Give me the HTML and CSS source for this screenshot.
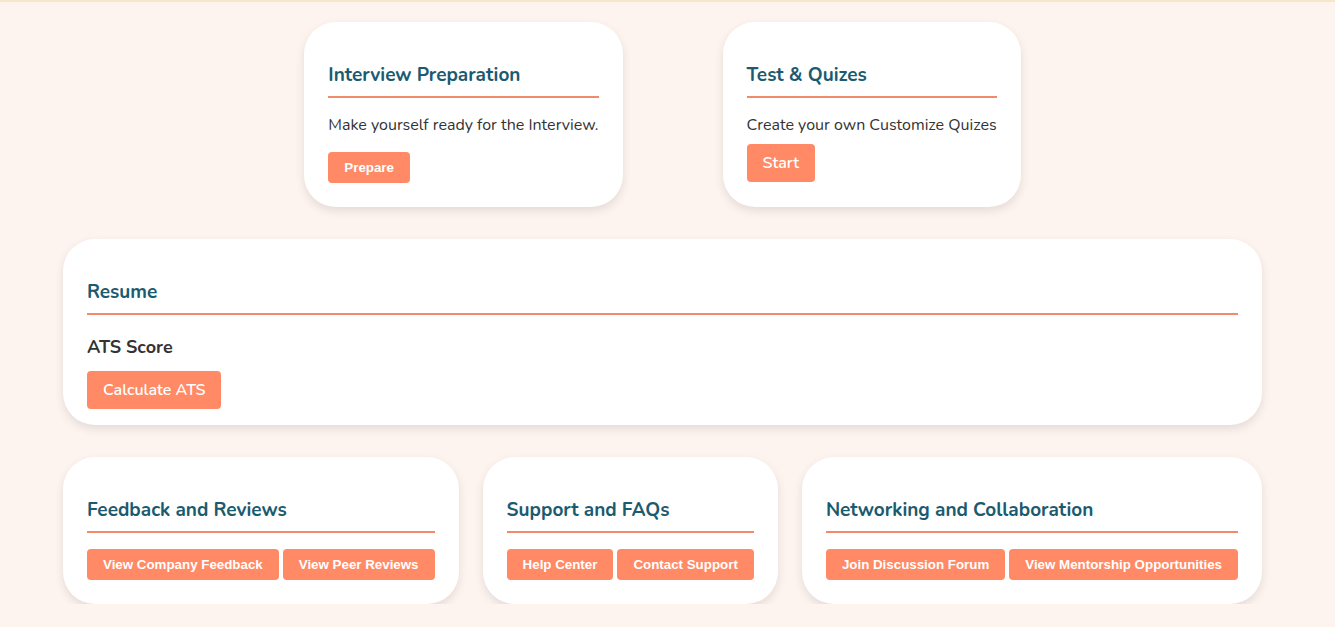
FILE: index.html
```html
<!DOCTYPE html>
<html lang="en">
<head>
  <meta charset="UTF-8" />
  <meta name="viewport" content="width=device-width, initial-scale=1.0"/>
  <title>Dashboard</title>
  <link rel="stylesheet" href="styles.css">
</head>
<body>
  <div class="topline"></div>
  <main class="dashboard">
    <div class="row row-top">
      <div class="card">
        <h3>Interview Preparation</h3>
        <p>Make yourself ready for the Interview.</p>
        <button class="btn">Prepare</button>
      </div>
      <div class="card">
        <h3>Test &amp; Quizes</h3>
        <p>Create your own Customize Quizes</p>
        <a class="btn-lg btn-start" href="#">Start</a>
      </div>
    </div>

    <div class="card card-wide">
      <h3>Resume</h3>
      <div class="ats-title">ATS Score</div>
      <a class="btn-lg" href="#">Calculate ATS</a>
    </div>

    <div class="row row-bottom">
      <div class="card">
        <h3>Feedback and Reviews</h3>
        <div class="btn-group">
          <button class="btn">View Company Feedback</button>
          <button class="btn">View Peer Reviews</button>
        </div>
      </div>
      <div class="card">
        <h3>Support and FAQs</h3>
        <div class="btn-group">
          <button class="btn">Help Center</button>
          <button class="btn">Contact Support</button>
        </div>
      </div>
      <div class="card">
        <h3>Networking and Collaboration</h3>
        <div class="btn-group">
          <button class="btn">Join Discussion Forum</button>
          <button class="btn">View Mentorship Opportunities</button>
        </div>
      </div>
    </div>
  </main>
</body>
</html>
```

FILE: styles.css
```css
body {
  margin: 0;
  padding: 0;
  background: #fdf3ef;
  font-family: "Nunito", Lato, "Noto Sans", sans-serif;
  color: #333;
}
.topline {
  height: 2px;
  background: #f8e7c6;
}
.dashboard {
  margin: 20px 73px 0 63px;
  display: flex;
  flex-direction: column;
  gap: 32px;
}
.row {
  display: flex;
}
.row-top {
  justify-content: center;
  gap: 100px;
}
.row-bottom {
  justify-content: space-between;
}
.card {
  background: white;
  border-radius: 32px;
  box-shadow: 0 4px 10px rgba(0,0,0,0.1);
  padding: 24px;
}
.card h3 {
  margin: 16px 0 0 0;
  padding-bottom: 8px;
  border-bottom: 2px solid #f28b6b;
  font-size: 19px;
  line-height: 26px;
  font-weight: 700;
  color: #1b5b70;
}
.card p {
  margin: 15px 0 15px 0;
  font-size: 16px;
  line-height: 24px;
}
.btn {
  background: #ff8a65;
  color: white;
  border: none;
  border-radius: 4px;
  padding: 8px 16px;
  font-family: "Liberation Sans", Arial, sans-serif;
  font-size: 13.333px;
  font-weight: bold;
  line-height: 15px;
  cursor: pointer;
}
.btn-lg {
  display: inline-block;
  background: #ff8a65;
  color: white;
  text-decoration: none;
  border-radius: 4px;
  padding: 8px 16px;
  font-size: 16px;
  font-weight: 600;
  line-height: 22px;
}
.btn-start {
  margin-top: -8px;
}
.ats-title {
  margin: 20px 0 12px 0;
  font-size: 18px;
  line-height: 24px;
  font-weight: 700;
}
.card-wide {
  padding-bottom: 16px;
}
.btn-group {
  margin-top: 16px;
  display: flex;
  gap: 4px;
}
```
